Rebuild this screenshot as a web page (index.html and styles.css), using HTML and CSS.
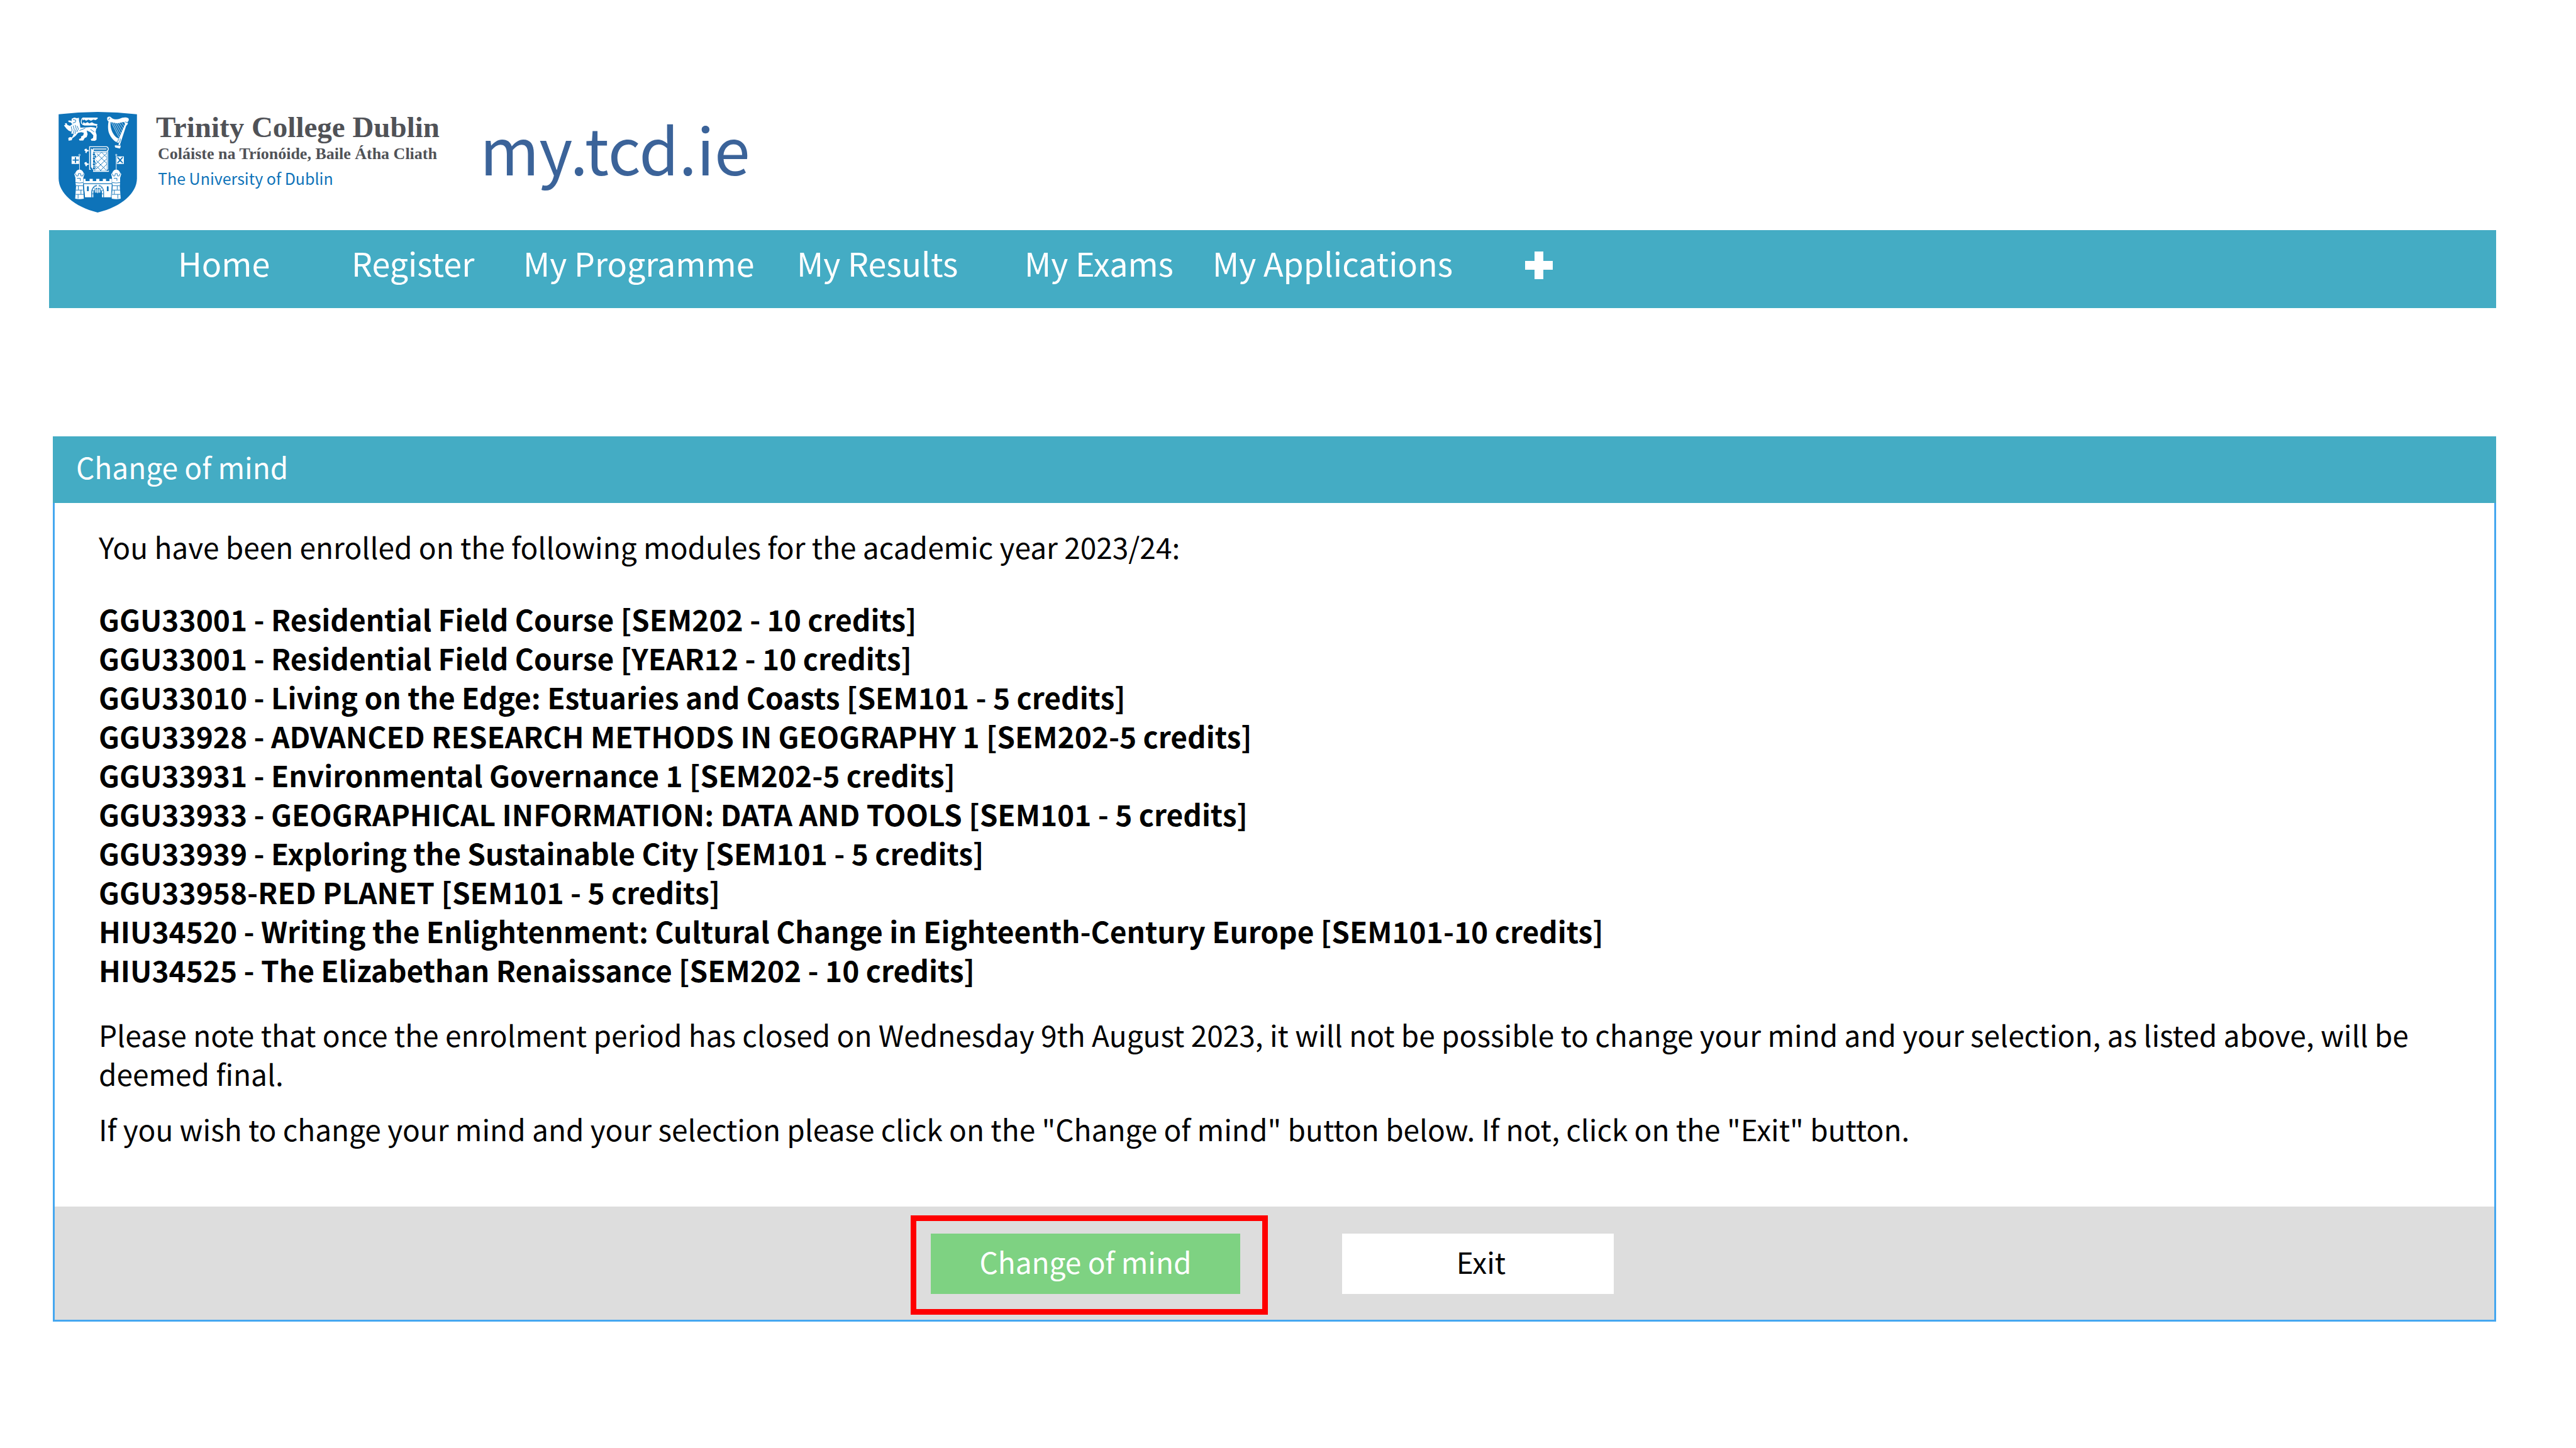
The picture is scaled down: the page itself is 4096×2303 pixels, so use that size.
FILE: index.html
```html
<!DOCTYPE html>
<html lang="en">
<head>
  <meta charset="UTF-8" />
  <meta name="viewport" content="width=device-width, initial-scale=1.0" />
  <title>my.tcd.ie - Change of mind</title>
  <link rel="stylesheet" href="styles.css">
</head>
<body>
  <header class="site-header">
    <svg class="crest" viewBox="105 87 544 699" role="img" aria-label="Trinity College Dublin crest">
      <path fill="#0e73b9" d="M105 103Q376 72 649 103V548C649 650 545 745 376 786C210 745 105 650 105 548Z"/>
      <!-- lion -->
      <g fill="#fff">
        <path d="M196 134L214 126L232 131L246 127L247 150L252 168L256 196L290 195L330 192L356 195L366 207L362 226L369 246L368 280L357 288L332 287L328 277L344 268L346 250L326 228L300 216L306 242L300 262L286 268L276 286L250 286L246 276L262 268L260 258L276 250L280 232L262 228L240 232L222 254L200 270L196 284L174 287L172 268L184 262L198 264L210 240L194 238L190 222L176 218L160 204L146 186L142 180L152 178L148 168L160 164L166 178L184 184L200 172L190 160L176 158L170 148L184 146L194 152Z"/>
      </g>
      <g fill="none" stroke="#0e73b9" stroke-width="4">
        <path d="M192 188L198 214L192 232M206 182L214 212L206 238M220 178L228 206L218 240M234 184L242 206L232 226M204 140L224 144L222 158L204 164M250 216L290 200M326 208L352 226"/>
      </g>
      <path fill="none" stroke="#fff" stroke-width="6" d="M350 206Q371 204 371 190Q370 178 352 178H284Q262 174 262 154Q262 128 282 128"/>
      <path fill="#fff" d="M270 126H376V134L362 144L346 140L330 148L312 141L296 148L284 141L272 146ZM274 172L276 158L290 166L306 158L318 167L336 159L352 168L374 172V180H284Z"/>
      <!-- harp -->
      <path fill="#fff" fill-rule="evenodd" d="M442 134C440 118 462 116 470 126C484 140 512 142 530 134C548 124 574 122 588 130C596 138 592 152 584 156L586 170L574 184L532 312L536 330L530 342L498 334L494 322L504 317L520 318L524 302C500 302 464 268 452 226C446 198 448 170 452 154C444 148 442 142 442 134ZM466 156C462 186 472 226 494 252C506 266 514 270 524 270L566 172L562 160C548 154 530 166 510 166C490 164 476 160 466 156Z"/>
      <path fill="none" stroke="#fff" stroke-width="3" d="M470 156L524 262M484 160L530 250M498 162L538 236M512 164L546 220M526 162L554 204M540 158L562 188"/>
      <path fill="none" stroke="#0e73b9" stroke-width="4" d="M566 156L586 162M508 294Q522 292 520 272M522 302Q536 292 532 272M504 318L532 320M450 140Q462 138 460 128"/>
      <!-- book -->
      <g fill="none" stroke="#fff" stroke-width="6">
        <path d="M328 486H320V329H438Q450 332 450 345Q450 358 438 361H346V340M344 345H438M446 361V488M344 500H448Q452 502 452 494M350 486V502"/>
      </g>
      <path fill="#fff" d="M356 368H440V496H356L366 478L358 462L366 448L356 426L366 400ZM330 340L344 350V486L330 470ZM286 346L298 342L302 350L314 352V360L302 362L298 374L290 370L292 360L284 356ZM286 438L298 434L302 444L314 446V454L302 456L298 466L290 462L292 454L284 450Z"/>
      <g fill="#0e73b9" stroke="#fff" stroke-width="4">
        <circle cx="350" cy="382" r="10"/><circle cx="350" cy="410" r="10"/><circle cx="350" cy="451" r="10"/><circle cx="350" cy="479" r="10"/>
      </g>
      <path fill="none" stroke="#0e73b9" stroke-width="4" d="M370 376L440 446M404 368L440 404M366 424L438 494M366 462L400 496M440 374L366 446M440 412L366 484M440 450L394 496M402 368L370 400"/>
      <!-- flags -->
      <path fill="#fff" d="M195 396H247V448H195ZM508 396H558V448H508Z"/>
      <path fill="none" stroke="#0e73b9" stroke-width="8" d="M222 402V442M202 422H244M514 402L550 442M550 402L514 442"/>
      <g fill="none" stroke="#fff" stroke-width="4">
        <circle cx="250" cy="386" r="5"/><circle cx="505" cy="386" r="5"/>
        <path d="M250 391V490M505 391V490"/>
      </g>
      <!-- castle -->
      <g fill="#fff">
        <path d="M222 510Q230 488 250 488Q268 488 278 510L284 518L276 546V578L274 604L280 690Q250 696 220 690L226 604L222 578V546L214 520Z"/>
        <path d="M478 510Q486 488 505 488Q524 488 532 510L540 518L532 546V578L530 604L536 690Q506 696 474 690L480 604L476 578V546L470 520Z"/>
        <path d="M278 552H292V568H320V552H342V568H366V552H388V568H412V552H434V568H458V552H474V583H278ZM279 588H475V680H418V640Q412 600 376 598Q340 600 334 640V680H288Z"/>
        <path d="M346 680H338V640Q342 606 370 602V616Q348 622 346 650ZM406 680H416V640Q412 606 384 602V616Q404 622 406 650ZM371 592H383V622H371Z"/>
      </g>
      <path fill="#0e73b9" d="M348 682V646Q352 618 376 616Q400 618 404 646V682Z"/>
      <g fill="none" stroke="#fff" stroke-width="5">
        <path d="M364 622V648M376 616V652M388 622V648M354 630H398M354 642H398"/>
      </g>
      <g fill="none" stroke="#0e73b9" stroke-width="4">
        <path d="M222 516L228 532H240L242 516H258L260 532H272L278 516M478 516L484 532H496L498 516H512L514 532H526L532 516"/>
        <path d="M222 578Q250 584 276 578M476 578Q505 584 532 578M232 548H256V566M488 548H510V566M226 600H274M242 600V628M224 630H272M260 630V658M224 660H278M240 660V688M480 600H530M512 600V628M478 630H532M492 630V658M476 660H534M516 660V688M334 630L348 636M334 656H348M418 630L404 636M418 656H404M344 610L356 620M408 610L396 620"/>
        <path d="M278 586V600L286 680M476 586V600L470 680M334 680V640Q340 600 370 596M418 680V640Q412 600 384 596"/>
      </g>
      <path fill="#0e73b9" d="M302 638V608Q308 596 314 608V638ZM440 638V608Q446 596 452 608V638Z"/>
    </svg>
    <div class="college">
      <p class="college-name">Trinity College Dublin</p>
      <p class="college-irish" lang="ga">Coláiste na Tríonóide, Baile Átha Cliath</p>
      <p class="college-university">The University of Dublin</p>
    </div>
    <h1 class="site-name">my.tcd.ie</h1>
  </header>

  <nav class="main-nav">
    <a href="#">Home</a>
    <a href="#">Register</a>
    <a href="#">My Programme</a>
    <a href="#">My Results</a>
    <a href="#">My Exams</a>
    <a href="#">My Applications</a>
    <button type="button" class="more-btn" aria-label="More">
      <svg viewBox="0 0 44 44"><path fill="#fff" d="M15 0H29V15H44V29H29V44H15V29H0V15H15Z"/></svg>
    </button>
  </nav>

  <main class="panel">
    <h2 class="panel-title">Change of mind</h2>
    <div class="panel-body">
      <p>You have been enrolled on the following modules for the academic year 2023/24:</p>
      <ul class="module-list">
        <li>GGU33001 - Residential Field Course [SEM202 - 10 credits]</li>
        <li>GGU33001 - Residential Field Course [YEAR12 - 10 credits]</li>
        <li>GGU33010 - Living on the Edge: Estuaries and Coasts [SEM101 - 5 credits]</li>
        <li>GGU33928 - ADVANCED RESEARCH METHODS IN GEOGRAPHY 1 [SEM202-5 credits]</li>
        <li>GGU33931 - Environmental Governance 1 [SEM202-5 credits]</li>
        <li>GGU33933 - GEOGRAPHICAL INFORMATION: DATA AND TOOLS [SEM101 - 5 credits]</li>
        <li>GGU33939 - Exploring the Sustainable City [SEM101 - 5 credits]</li>
        <li>GGU33958-RED PLANET [SEM101 - 5 credits]</li>
        <li>HIU34520 - Writing the Enlightenment: Cultural Change in Eighteenth-Century Europe [SEM101-10 credits]</li>
        <li>HIU34525 - The Elizabethan Renaissance [SEM202 - 10 credits]</li>
      </ul>
      <p class="note">Please note that once the enrolment period has closed on Wednesday 9th August 2023, it will not be possible to change your mind and your selection, as listed above, will be deemed final.</p>
      <p>If you wish to change your mind and your selection please click on the "Change of mind" button below. If not, click on the "Exit" button.</p>
    </div>
    <div class="panel-footer">
      <div class="highlight">
        <button type="button" class="change-btn">Change of mind</button>
      </div>
      <button type="button" class="exit-btn">Exit</button>
    </div>
  </main>
</body>
</html>
```
FILE: styles.css
```css
* {
  box-sizing: border-box;
  margin: 0;
  padding: 0;
}

body {
  background: #fff;
  color: #000;
  font-family: "Noto Sans CJK SC", "Noto Sans", sans-serif;
  font-size: 46px;
  line-height: 62px;
  padding: 178px 127px 0 78px;
}

.site-header {
  display: flex;
  align-items: flex-start;
  height: 188px;
  padding-left: 15px;
}

.crest {
  width: 125px;
  height: 160px;
}

.college {
  margin-left: 30px;
  color: #505257;
  font-family: "Liberation Serif", serif;
  font-weight: bold;
}

.college-name {
  font-size: 47px;
  line-height: 48px;
}

.college-irish {
  font-size: 26px;
  line-height: 38px;
  padding-left: 3px;
}

.college-university {
  color: #0e73b9;
  font-family: "Noto Sans CJK SC", "Noto Sans", sans-serif;
  font-size: 25px;
  font-weight: normal;
  line-height: 38px;
  padding-left: 3px;
}

.site-name {
  margin-left: 64px;
  color: #3b6399;
  font-size: 102px;
  font-weight: normal;
  line-height: 114px;
}

.main-nav {
  display: grid;
  grid-template-columns: 276px 273px 435px 362px 299px 497px auto;
  justify-content: start;
  align-items: center;
  background: #44acc4;
  padding: 0 0 20px 205px;
}

.main-nav a {
  color: #fff;
  font-size: 52px;
  line-height: 104px;
  text-decoration: none;
  white-space: nowrap;
}

.more-btn {
  background: none;
  border: none;
  cursor: pointer;
  height: 44px;
  margin-top: 8px;
}

.more-btn svg {
  display: block;
  width: 44px;
  height: 44px;
}

.panel {
  margin: 204px 0 0 6px;
  border: 3px solid #45a7f0;
  border-top: none;
}

.panel-title {
  margin: 0 -3px;
  padding: 0 37px 10px;
  background: #44acc4;
  color: #fff;
  font-size: 46px;
  font-weight: normal;
  line-height: 96px;
}

.panel-body {
  padding: 38px 70px 93px;
}

.module-list {
  list-style: none;
  margin: 53px 0 41px;
  font-weight: bold;
}

.note {
  margin-bottom: 26px;
}

.panel-footer {
  display: flex;
  align-items: flex-start;
  gap: 118px;
  background: #ddd;
  padding: 14px 0 8px 1361px;
}

.highlight {
  border: 9px solid #f00;
  padding: 20px 35px 24px 23px;
}

.panel-footer button {
  display: block;
  height: 96px;
  padding-bottom: 9px;
  border: none;
  cursor: pointer;
  font-family: inherit;
  font-size: 46px;
  line-height: 62px;
}

.change-btn {
  width: 492px;
  background: #7ed282;
  color: #fff;
}

.panel-footer .exit-btn {
  width: 432px;
  margin-top: 29px;
  padding-left: 10px;
  background: #fff;
  color: #000;
}
```
